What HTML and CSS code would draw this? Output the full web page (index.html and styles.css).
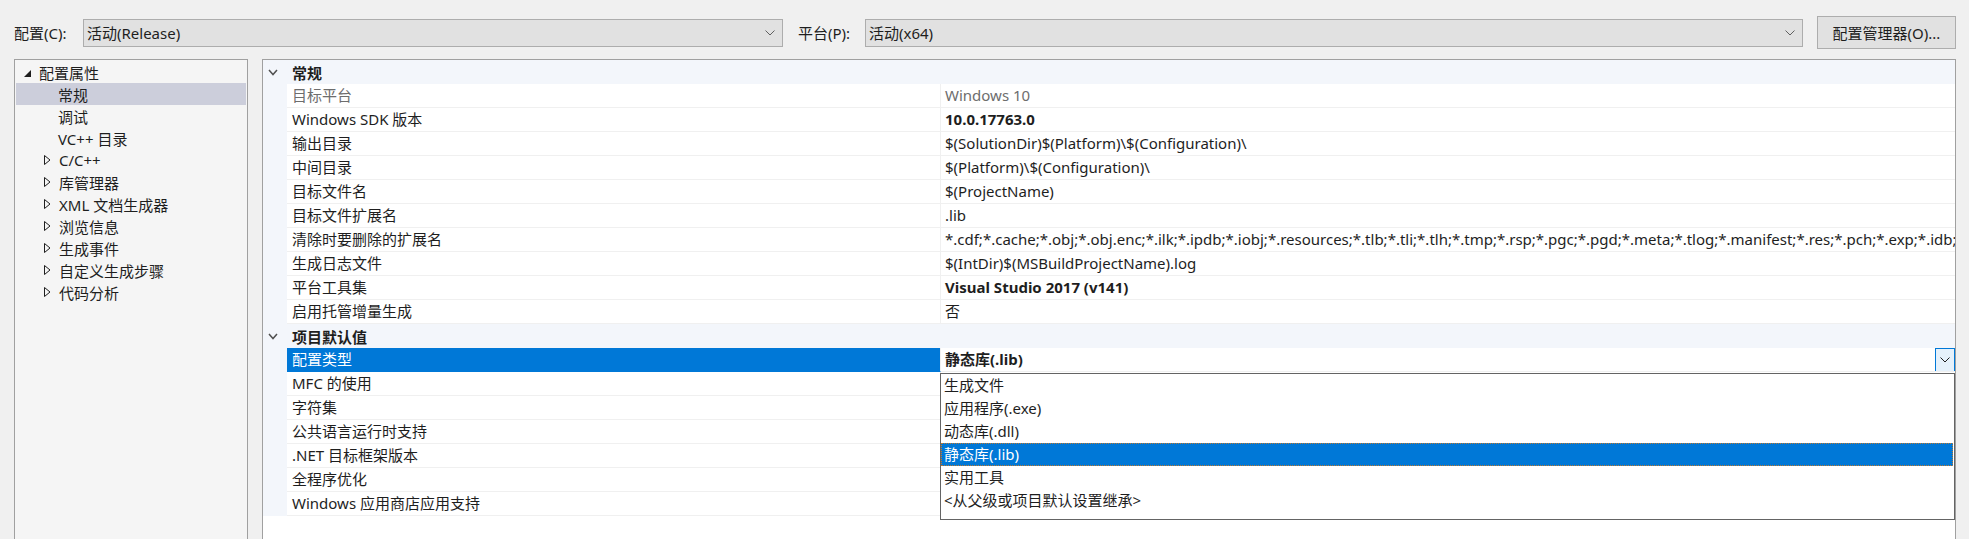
FILE: index.html
```html
<!DOCTYPE html>
<html lang="zh-CN">
<head>
<meta charset="utf-8">
<title>属性页</title>
<link rel="stylesheet" href="styles.css">
</head>
<body>
<div class="toolbar">
  <span class="lbl lbl-config">配置(C):</span>
  <div class="combo combo-config"><span>活动(Release)</span><svg class="cv" width="10" height="6" viewBox="0 0 10 6"><polyline points="0.5,0.5 5,5 9.5,0.5" fill="none" stroke="#606060" stroke-width="1"/></svg></div>
  <span class="lbl lbl-platform">平台(P):</span>
  <div class="combo combo-platform"><span>活动(x64)</span><svg class="cv" width="10" height="6" viewBox="0 0 10 6"><polyline points="0.5,0.5 5,5 9.5,0.5" fill="none" stroke="#606060" stroke-width="1"/></svg></div>
  <button class="btn">配置管理器(O)...</button>
</div>

<div class="main">
  <div class="tree">
    <div class="titem lvl0"><svg class="tri" width="7" height="7" viewBox="0 0 7 7"><polygon points="7,0 7,7 0,7" fill="#1e1e1e"/></svg><span>配置属性</span></div>
    <div class="titem lvl1 sel"><span>常规</span></div>
    <div class="titem lvl1"><span>调试</span></div>
    <div class="titem lvl1"><span>VC++ 目录</span></div>
    <div class="titem lvl1c"><svg class="tri2" width="7" height="10" viewBox="0 0 7 10"><polygon points="0.5,0.5 6,5 0.5,9.5" fill="none" stroke="#1e1e1e" stroke-width="1"/></svg><span>C/C++</span></div>
    <div class="titem lvl1c"><svg class="tri2" width="7" height="10" viewBox="0 0 7 10"><polygon points="0.5,0.5 6,5 0.5,9.5" fill="none" stroke="#1e1e1e" stroke-width="1"/></svg><span>库管理器</span></div>
    <div class="titem lvl1c"><svg class="tri2" width="7" height="10" viewBox="0 0 7 10"><polygon points="0.5,0.5 6,5 0.5,9.5" fill="none" stroke="#1e1e1e" stroke-width="1"/></svg><span>XML 文档生成器</span></div>
    <div class="titem lvl1c"><svg class="tri2" width="7" height="10" viewBox="0 0 7 10"><polygon points="0.5,0.5 6,5 0.5,9.5" fill="none" stroke="#1e1e1e" stroke-width="1"/></svg><span>浏览信息</span></div>
    <div class="titem lvl1c"><svg class="tri2" width="7" height="10" viewBox="0 0 7 10"><polygon points="0.5,0.5 6,5 0.5,9.5" fill="none" stroke="#1e1e1e" stroke-width="1"/></svg><span>生成事件</span></div>
    <div class="titem lvl1c"><svg class="tri2" width="7" height="10" viewBox="0 0 7 10"><polygon points="0.5,0.5 6,5 0.5,9.5" fill="none" stroke="#1e1e1e" stroke-width="1"/></svg><span>自定义生成步骤</span></div>
    <div class="titem lvl1c"><svg class="tri2" width="7" height="10" viewBox="0 0 7 10"><polygon points="0.5,0.5 6,5 0.5,9.5" fill="none" stroke="#1e1e1e" stroke-width="1"/></svg><span>代码分析</span></div>
  </div>

  <div class="grid">
    <div class="ghead"><svg class="gcv" width="10" height="7" viewBox="0 0 10 7"><polyline points="1,1 5,5.5 9,1" fill="none" stroke="#505050" stroke-width="1.5"/></svg><span>常规</span></div>
    <div class="prow"><div class="gut"></div><div class="pname dim">目标平台</div><div class="pval dim">Windows 10</div></div>
    <div class="prow"><div class="gut"></div><div class="pname">Windows SDK 版本</div><div class="pval b">10.0.17763.0</div></div>
    <div class="prow"><div class="gut"></div><div class="pname">输出目录</div><div class="pval">$(SolutionDir)$(Platform)\$(Configuration)\</div></div>
    <div class="prow"><div class="gut"></div><div class="pname">中间目录</div><div class="pval">$(Platform)\$(Configuration)\</div></div>
    <div class="prow"><div class="gut"></div><div class="pname">目标文件名</div><div class="pval">$(ProjectName)</div></div>
    <div class="prow"><div class="gut"></div><div class="pname">目标文件扩展名</div><div class="pval">.lib</div></div>
    <div class="prow"><div class="gut"></div><div class="pname">清除时要删除的扩展名</div><div class="pval">*.cdf;*.cache;*.obj;*.obj.enc;*.ilk;*.ipdb;*.iobj;*.resources;*.tlb;*.tli;*.tlh;*.tmp;*.rsp;*.pgc;*.pgd;*.meta;*.tlog;*.manifest;*.res;*.pch;*.exp;*.idb;*.rep;*.xdc;*.pdb;*_manifest.rc;*.bsc;*.sbr;*.xml;*.metagen;*.bi</div></div>
    <div class="prow"><div class="gut"></div><div class="pname">生成日志文件</div><div class="pval">$(IntDir)$(MSBuildProjectName).log</div></div>
    <div class="prow"><div class="gut"></div><div class="pname">平台工具集</div><div class="pval b">Visual Studio 2017 (v141)</div></div>
    <div class="prow"><div class="gut"></div><div class="pname">启用托管增量生成</div><div class="pval">否</div></div>
    <div class="ghead"><svg class="gcv" width="10" height="7" viewBox="0 0 10 7"><polyline points="1,1 5,5.5 9,1" fill="none" stroke="#505050" stroke-width="1.5"/></svg><span>项目默认值</span></div>
    <div class="prow"><div class="gut"></div><div class="pname psel">配置类型</div><div class="pval b pedit"><span>静态库(.lib)</span><span class="dbtn"><svg width="10" height="6" viewBox="0 0 10 6"><polyline points="0.5,0.5 5,5 9.5,0.5" fill="none" stroke="#1e1e1e" stroke-width="1"/></svg></span></div></div>
    <div class="prow"><div class="gut"></div><div class="pname">MFC 的使用</div><div class="pval"></div></div>
    <div class="prow"><div class="gut"></div><div class="pname">字符集</div><div class="pval"></div></div>
    <div class="prow"><div class="gut"></div><div class="pname">公共语言运行时支持</div><div class="pval"></div></div>
    <div class="prow"><div class="gut"></div><div class="pname">.NET 目标框架版本</div><div class="pval"></div></div>
    <div class="prow"><div class="gut"></div><div class="pname">全程序优化</div><div class="pval"></div></div>
    <div class="prow"><div class="gut"></div><div class="pname">Windows 应用商店应用支持</div><div class="pval"></div></div>

    <div class="dropdown">
      <div class="ditem">生成文件</div>
      <div class="ditem">应用程序(.exe)</div>
      <div class="ditem">动态库(.dll)</div>
      <div class="ditem dsel">静态库(.lib)</div>
      <div class="ditem">实用工具</div>
      <div class="ditem">&lt;从父级或项目默认设置继承&gt;</div>
    </div>
  </div>
</div>
</body>
</html>
```

FILE: styles.css
```css
html, body {
  margin: 0;
  padding: 0;
  background: #f0f0f0;
  overflow: hidden;
  height: 539px;
}
body {
  font-family: "Segoe UI", "Noto Sans", "Noto Sans CJK SC", sans-serif;
  font-size: 15px;
  color: #1e1e1e;
}
.toolbar {
  display: flex;
  align-items: center;
  padding: 16px 0 0 14px;
  height: 33px;
}
.lbl {
  white-space: nowrap;
}
.lbl-config { width: 69px; }
.lbl-platform { width: 67px; margin-left: 15px; }
.combo {
  box-sizing: border-box;
  height: 28px;
  background: #e1e1e1;
  border: 1px solid #adadad;
  display: flex;
  align-items: center;
  justify-content: space-between;
  padding: 0 7px 0 3px;
}
.combo-config { width: 700px; }
.combo-platform { width: 938px; }
.cv { display: block; }
.btn {
  box-sizing: border-box;
  margin-left: 14px;
  width: 139px;
  height: 33px;
  background: #e1e1e1;
  border: 1px solid #adadad;
  font: inherit;
  color: #1e1e1e;
  padding: 0;
}
.main {
  display: flex;
  gap: 14px;
  padding-left: 14px;
  margin-top: 10px;
}
.tree {
  box-sizing: border-box;
  width: 234px;
  height: 500px;
  background: #f5f5f5;
  border: 1px solid #a0a0a0;
  padding: 1px;
}
.titem {
  height: 22px;
  display: flex;
  align-items: center;
  white-space: nowrap;
  position: relative;
}
.lvl0 { padding-left: 8px; }
.lvl0 .tri { margin-right: 8px; margin-top: 2px; }
.lvl1 { padding-left: 42px; }
.lvl1c { padding-left: 28px; }
.lvl1c .tri2 { margin-right: 8px; }
.sel { background: #cccedb; }
.grid {
  box-sizing: border-box;
  position: relative;
  width: 1694px;
  height: 500px;
  background: #ffffff;
  border: 1px solid #a0a0a0;
}
.ghead {
  height: 24px;
  background: #f3f6fb;
  display: flex;
  align-items: center;
  font-weight: bold;
  white-space: nowrap;
}
.gcv { margin-left: 5px; margin-right: 14px; }
.prow {
  display: flex;
  height: 24px;
}
.gut {
  width: 24px;
  flex: none;
  background: #f3f6fb;
}
.pname {
  box-sizing: border-box;
  width: 654px;
  flex: none;
  padding-left: 5px;
  border-right: 1px solid #f0f0f0;
  border-bottom: 1px solid #f0f0f0;
  line-height: 23px;
  white-space: nowrap;
}
.pval {
  box-sizing: border-box;
  flex: 1;
  min-width: 0;
  padding-left: 4px;
  border-bottom: 1px solid #f0f0f0;
  line-height: 23px;
  white-space: nowrap;
  overflow: hidden;
}
.dim { color: #6d6d6d; }
.b { font-weight: bold; }
.psel { background: #0078d7; color: #ffffff; border-bottom-color: #0078d7; }
.pedit {
  display: flex;
  justify-content: space-between;
  align-items: center;
  padding-right: 0;
}
.dbtn {
  box-sizing: border-box;
  width: 20px;
  height: 24px;
  border: 1px solid #0078d7;
  background: #e5f1fb;
  display: flex;
  align-items: center;
  justify-content: center;
}
.dropdown {
  position: absolute;
  left: 677px;
  top: 313px;
  width: 1015px;
  height: 147px;
  box-sizing: border-box;
  background: #ffffff;
  border: 1px solid #646464;
  padding-top: 0;
}
.ditem {
  height: 23px;
  line-height: 23px;
  padding-left: 3px;
  white-space: nowrap;
}
.dsel {
  background: #0078d7;
  color: #ffffff;
  outline: 1px dotted #c07a30;
  outline-offset: -1px;
  margin-right: 1px;
}
```
